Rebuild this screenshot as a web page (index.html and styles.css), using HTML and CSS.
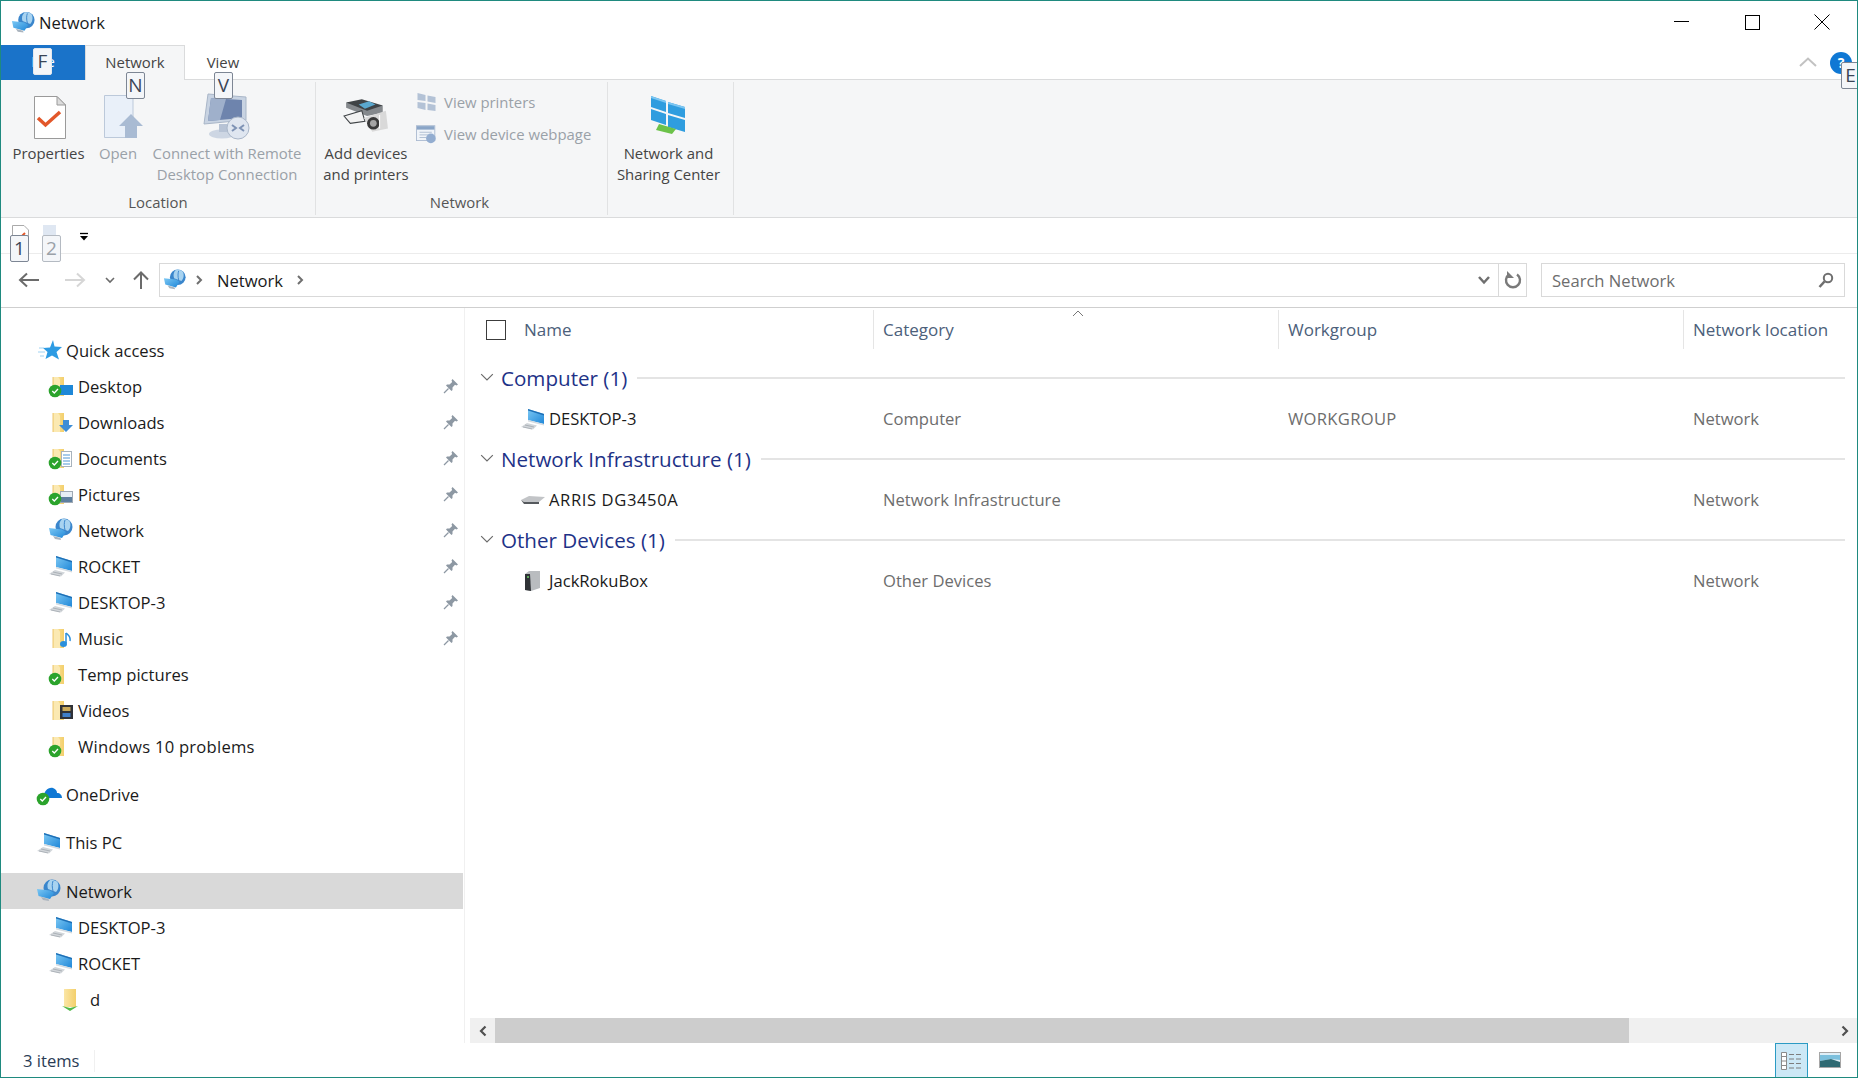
FILE: index.html
```html
<!DOCTYPE html>
<html lang="en">
<head>
<meta charset="utf-8">
<title>Network</title>
<link rel="stylesheet" href="styles.css">
</head>
<body>
<svg class="defs" width="0" height="0" aria-hidden="true">
  <defs>
    <linearGradient id="gblue" x1="0" y1="0" x2="1" y2="1"><stop offset="0" stop-color="#7cc8f4"/><stop offset="1" stop-color="#1f87d8"/></linearGradient>
    <linearGradient id="gfold" x1="0" y1="0" x2="1" y2="0"><stop offset="0" stop-color="#fbe6a6"/><stop offset="1" stop-color="#f3cf6b"/></linearGradient>
    <symbol id="network" viewBox="0 0 26 24">
      <circle cx="16" cy="9" r="8.500" fill="#3a86cc"/>
      <path d="M14 1C11 4 11 7 12 10L20 13C23 10 23 5 21 2.500 19 1.200 16.500 .7 14 1z" fill="#a8d3f0"/>
      <path d="M17 2C16 5 16 8 17 12" stroke="#3a86cc" fill="none"/>
      <path d="M1 10 14 11.500 18 14 14 20 2.500 17z" fill="url(#gblue)"/>
      <path d="M5 18 12.500 20 13 22 7 21z" fill="#aab4be"/>
    </symbol>
    <symbol id="computer" viewBox="0 0 26 24">
      <path d="M8 2 24 7V17L8 13z" fill="url(#gblue)"/>
      <path d="M8 2 24 7V8.500L8 3.500z" fill="#1e6fb5"/>
      <path d="M8 13 24 17V18.500L8 14.500z" fill="#d5dbe0"/>
      <path d="M7 16 17 18.500 13 22.500 1 20z" fill="#d2d6da"/>
      <path d="M5 18 14 20M3 20 12 22" stroke="#9aa1a8" stroke-width=".7"/>
    </symbol>
    <symbol id="folder" viewBox="0 0 26 24">
      <path d="M5 3H16V22H5z" fill="url(#gfold)"/>
      <path d="M5 3H10L12 5.500V22H5z" fill="#fbe9b2"/>
      <path d="M5 3V22" stroke="#e8b94c" stroke-width=".8"/>
    </symbol>
    <symbol id="sync" viewBox="0 0 26 24">
      <circle cx="7" cy="17" r="6.300" fill="#2ba32c"/>
      <path d="M4.300 17 6.300 19 10 15" fill="none" stroke="#fff" stroke-width="1.300"/>
    </symbol>
    <symbol id="pin" viewBox="0 0 16 16">
      <path d="M9.500 1 15 6.500 13.500 7.500 12 6.800 9.500 9.500 9.500 12 8.500 13 3 7.500 4 6.500 6.500 6.500 9.200 4 8.500 2.500z" fill="#8d98a3"/>
      <path d="M5.500 10.500 1 15" stroke="#8d98a3" stroke-width="1.300"/>
    </symbol>
    <symbol id="chev" viewBox="0 0 12 12">
      <path d="M1 3.500 6 8.500 11 3.500" fill="none" stroke="currentColor" stroke-width="1"/>
    </symbol>
    <symbol id="crumb" viewBox="0 0 10 12">
      <path d="M3 2 7 6 3 10" fill="none" stroke="#6f6f6f" stroke-width="2"/>
    </symbol>
  </defs>
</svg>

<div class="window">
  <header class="titlebar">
    <svg class="title-ico"><use href="#network"/></svg>
    <span class="title-text">Network</span>
    <div class="winctl">
      <span class="winbtn"><svg width="16" height="16" viewBox="0 0 16 16"><path d="M0 7.500H15" stroke="#000"/></svg></span>
      <span class="winbtn"><svg width="16" height="16" viewBox="0 0 16 16"><rect x="1.500" y="1.500" width="14" height="14" fill="none" stroke="#000"/></svg></span>
      <span class="winbtn"><svg width="16" height="16" viewBox="0 0 16 16"><path d="M.5.500 15.500 15.500M15.500.500 .5 15.500" stroke="#000"/></svg></span>
    </div>
  </header>

  <nav class="tabs">
    <span class="tab tab-file">File</span>
    <span class="tab tab-active">Network</span>
    <span class="tab tab-view">View</span>
    <span class="tabs-right">
      <svg class="collapse" width="18" height="10" viewBox="0 0 18 10"><path d="M1 9 9 1.500 17 9" fill="none" stroke="#c2c2c2" stroke-width="2"/></svg>
      <span class="help">?</span>
    </span>
  </nav>

  <section class="ribbon">
    <div class="rgroup rg-location">
      <div class="rbody">
        <div class="bigbtn bb-prop">
          <svg class="bigico" width="36" height="46" viewBox="0 0 36 46">
            <path d="M3.500 2.500H26L34.500 11V44.500H3.500z" fill="#fff" stroke="#9a9a9a"/>
            <path d="M26 2.500V11H34.500z" fill="#dcdcdc" stroke="#9a9a9a"/>
            <path d="M7 24 14.500 31 29 18" fill="none" stroke="#e2572a" stroke-width="3.500"/>
          </svg>
          <span>Properties</span>
        </div>
        <div class="bigbtn bb-open is-off">
          <svg class="bigico" width="46" height="46" viewBox="0 0 46 46">
            <path d="M3.500 2.500H32V44.500H3.500z" fill="#e9f0f9" stroke="#bcc9da"/>
            <path d="M30 21 42 33H36V45H24V33H18z" fill="#a9bbd3"/>
          </svg>
          <span>Open</span>
        </div>
        <div class="bigbtn bb-rdp is-off">
          <svg class="bigico" width="50" height="50" viewBox="0 0 50 50">
            <path d="M6 3 44 6V29L2 33z" fill="#c8d3e2" stroke="#a9b6c8"/>
            <path d="M9 7 40 9V27L6 30z" fill="#6e84ad"/>
            <path d="M9 7 24 8 18 29 6 30z" fill="#9fb0cb"/>
            <ellipse cx="20" cy="43" rx="13" ry="4.500" fill="#cdd6e3"/>
            <path d="M17 33H25V41H17z" fill="#b7c3d5"/>
            <circle cx="36" cy="37" r="11" fill="#dfe6f0" stroke="#a9b6c8"/>
            <path d="M30 34 34 37 30 40M42 34 38 37 42 40" fill="none" stroke="#7e93b5" stroke-width="2"/>
          </svg>
          <span>Connect with Remote<br>Desktop Connection</span>
        </div>
      </div>
      <div class="rlabel rl-loc">Location</div>
    </div>

    <div class="rgroup rg-network">
      <div class="rbody">
        <div class="bigbtn bb-add">
          <svg class="bigico" width="46" height="50" viewBox="1 -1 44 38">
            <path d="M4 5V10L24 18 39 15V8z" fill="#85898d"/>
            <path d="M4 5 19 2 39 8 24 13z" fill="#3f4346"/>
            <path d="M16 7 26 4 32 7 22 11z" fill="#5aa8cf"/>
            <path d="M2 18 19 13 22 23 8 25z" fill="#f2f2f2" stroke="#3f4346"/>
            <path d="M21 20 42 13 44 30 29 33z" fill="#d9d9d9"/>
            <circle cx="30" cy="25" r="6" fill="#3a3a3a"/>
            <circle cx="30" cy="25" r="3.200" fill="#a5a5a5"/>
            <path d="M36 30V17" stroke="#fff"/>
          </svg>
          <span>Add devices<br>and printers</span>
        </div>
        <div class="smallcol">
          <div class="smallbtn is-off">
            <svg width="20" height="20" viewBox="0 0 20 20"><path d="M1 1 9 3V9L1 8zM11 3.500 19 5V11L11 9.500zM1 10 9 11V18L1 16zM11 11.500 19 13V19L11 18z" fill="#b3c2d6"/></svg>
            <span>View printers</span>
          </div>
          <div class="smallbtn is-off">
            <svg width="24" height="22" viewBox="0 0 24 22"><rect x=".5" y="1.500" width="21" height="17" fill="#f0f4f9" stroke="#a9b9cf"/><path d="M1 2H21V6H1z" fill="#8aa5c7"/><path d="M4 9H18M4 12H14M4 15H12" stroke="#a9b9cf"/><circle cx="17" cy="16" r="5.500" fill="#93add0"/></svg>
            <span>View device webpage</span>
          </div>
        </div>
      </div>
      <div class="rlabel">Network</div>
    </div>

    <div class="rgroup rg-share">
      <div class="rbody">
        <div class="bigbtn bb-share">
          <svg class="bigico" width="38" height="42" viewBox="0 0 38 42">
            <path d="M1 1 16 6V17L1 12zM18 7 35 12V23L18 18zM1 14 16 19V30L1 25zM18 20 35 25V37L18 32z" fill="#2f9ddf"/>
            <path d="M1 1 16 6V8L1 3zM18 7 35 12V14L18 9z" fill="#7cc6f2"/>
            <path d="M9 29 26 34 22 39 6 35z" fill="#6cc24a"/>
          </svg>
          <span>Network and<br>Sharing Center</span>
        </div>
      </div>
    </div>
  </section>

  <div class="qat">
    <svg class="qat-ico" width="17" height="20" viewBox="0 0 17 20"><path d="M.5.500H12L16.500 5V19.500H.5z" fill="#fff" stroke="#aaa"/><path d="M4 11 7 14 13 8" fill="none" stroke="#e2572a" stroke-width="2"/></svg>
    <svg class="qat-ico" width="17" height="20" viewBox="0 0 17 20"><rect width="13" height="20" x="1" fill="#dfe7f2"/></svg>
    <svg class="qat-more" width="10" height="10" viewBox="0 0 10 10"><path d="M1 1.500H9" stroke="#000" stroke-width="1.300"/><path d="M1 4H9L5 8.500z" fill="#000"/></svg>
  </div>

  <div class="addrrow">
    <div class="navbtns">
      <svg class="nb-back" width="22" height="16" viewBox="0 0 22 16"><path d="M21 8H3M9 1.500 2 8 9 14.500" fill="none" stroke="#6b6b6b" stroke-width="2"/></svg>
      <svg class="nb-fwd" width="22" height="16" viewBox="0 0 22 16"><path d="M1 8H19M13 1.500 20 8 13 14.500" fill="none" stroke="#d6d6d6" stroke-width="2"/></svg>
      <svg class="nb-down" width="10" height="8" viewBox="0 0 10 8"><path d="M1 2 5 6 9 2" fill="none" stroke="#6b6b6b" stroke-width="1.600"/></svg>
      <svg class="nb-up" width="18" height="20" viewBox="0 0 18 20"><path d="M9 19V3M2 9.500 9 2.500 16 9.500" fill="none" stroke="#6b6b6b" stroke-width="2"/></svg>
    </div>
    <div class="addrbox">
      <svg class="addr-net"><use href="#network"/></svg>
      <svg class="crumb"><use href="#crumb"/></svg>
      <span class="addr-text">Network</span>
      <svg class="crumb"><use href="#crumb"/></svg>
      <svg class="addr-drop" width="14" height="10" viewBox="0 0 14 10"><path d="M2 2 7 7.500 12 2" fill="none" stroke="#6f6f6f" stroke-width="2.500"/></svg>
      <span class="addr-refresh">
        <svg width="18" height="18" viewBox="0 0 18 18"><path d="M13 3.500A7 7 0 1 1 5 3.500" fill="none" stroke="#7a7a7a" stroke-width="2.400"/><path d="M4 0V7H11z" fill="#7a7a7a" transform="translate(-1 0)"/></svg>
      </span>
    </div>
    <div class="searchbox">
      <span>Search Network</span>
      <svg width="16" height="17" viewBox="0 0 16 17"><circle cx="10" cy="6" r="4.200" fill="none" stroke="#6f6f6f" stroke-width="2"/><path d="M6.500 9.500 1.500 15" stroke="#6f6f6f" stroke-width="2.600"/></svg>
    </div>
  </div>

  <main class="main">
    <aside class="navpane">
      <div class="navgroup">
        <div class="row lv1"><svg class="ico" viewBox="0 0 26 24"><path d="M17 2 18.500 8.500 26 9 20.500 14 23 21.500 16 17.500 9.500 21 11.500 14 7 10 14 9.500z" fill="#2d9be3"/><path d="M3 10H8M2 14H9M4 18H8" stroke="#9fd2f2"/></svg><span>Quick access</span></div>
        <div class="row lv2"><svg class="ico" viewBox="0 0 26 24"><use href="#folder"/><rect x="12" y="11" width="13" height="10" fill="#1e88d8"/><use href="#sync"/></svg><span>Desktop</span><svg class="pin"><use href="#pin"/></svg></div>
        <div class="row lv2"><svg class="ico" viewBox="0 0 26 24"><use href="#folder"/><path d="M15 10H21V15H25L18 22 11 15H15z" fill="#3d8dd6"/></svg><span>Downloads</span><svg class="pin"><use href="#pin"/></svg></div>
        <div class="row lv2"><svg class="ico" viewBox="0 0 26 24"><use href="#folder"/><rect x="13.500" y="5.500" width="10" height="15" fill="#fff" stroke="#a8b3bd"/><path d="M15 9H22M15 12H22M15 15H22M15 18H22" stroke="#4e97d6"/><use href="#sync"/></svg><span>Documents</span><svg class="pin"><use href="#pin"/></svg></div>
        <div class="row lv2"><svg class="ico" viewBox="0 0 26 24"><use href="#folder"/><rect x="12.500" y="9.500" width="12" height="11" fill="#e7eef5" stroke="#9fa9b4"/><path d="M13 15H24V20H13z" fill="#5e7f9f"/><use href="#sync"/></svg><span>Pictures</span><svg class="pin"><use href="#pin"/></svg></div>
        <div class="row lv2"><svg class="ico"><use href="#network"/></svg><span>Network</span><svg class="pin"><use href="#pin"/></svg></div>
        <div class="row lv2"><svg class="ico"><use href="#computer"/></svg><span>ROCKET</span><svg class="pin"><use href="#pin"/></svg></div>
        <div class="row lv2"><svg class="ico"><use href="#computer"/></svg><span>DESKTOP-3</span><svg class="pin"><use href="#pin"/></svg></div>
        <div class="row lv2"><svg class="ico" viewBox="0 0 26 24"><use href="#folder"/><path d="M18 7V17" stroke="#2a8fdc" stroke-width="1.500"/><ellipse cx="15.500" cy="18" rx="3.500" ry="3" fill="#2a8fdc"/><path d="M18 7C20 9 23 10 22 15" fill="none" stroke="#2a8fdc" stroke-width="1.500"/></svg><span>Music</span><svg class="pin"><use href="#pin"/></svg></div>
        <div class="row lv2"><svg class="ico" viewBox="0 0 26 24"><use href="#folder"/><use href="#sync"/></svg><span>Temp pictures</span></div>
        <div class="row lv2"><svg class="ico" viewBox="0 0 26 24"><use href="#folder"/><rect x="12" y="7" width="13" height="14" fill="#2f3238"/><rect x="14.500" y="9" width="8" height="4" fill="#c9a95a"/><rect x="14.500" y="15" width="8" height="4" fill="#3f7fc9"/></svg><span>Videos</span></div>
        <div class="row lv2"><svg class="ico" viewBox="0 0 26 24"><use href="#folder"/><use href="#sync"/></svg><span class="wide">Windows 10 problems</span></div>
      </div>
      <div class="navgroup">
        <div class="row lv1"><svg class="ico" viewBox="0 0 26 24"><path d="M7 16C8 9 12 5 17 6 20 7 21 9 21 11 24 11 26 13 26 16z" fill="#0f78d4"/><use href="#sync"/></svg><span>OneDrive</span></div>
      </div>
      <div class="navgroup">
        <div class="row lv1"><svg class="ico"><use href="#computer"/></svg><span>This PC</span></div>
      </div>
      <div class="navgroup">
        <div class="row lv1 is-selected"><svg class="ico"><use href="#network"/></svg><span>Network</span></div>
        <div class="row lv2"><svg class="ico"><use href="#computer"/></svg><span>DESKTOP-3</span></div>
        <div class="row lv2"><svg class="ico"><use href="#computer"/></svg><span>ROCKET</span></div>
        <div class="row lv3"><svg class="ico" viewBox="0 0 26 24"><path d="M4 2H16V20H4z" fill="url(#gfold)"/><path d="M2 19 10 21 18 19 10 24z" fill="#52b848"/></svg><span>d</span></div>
      </div>
    </aside>

    <section class="content">
      <div class="colheads">
        <div class="col col-name">
          <span class="checkbox"></span><span>Name</span>
        </div>
        <div class="col col-cat">Category
          <svg class="sortcaret" width="12" height="7" viewBox="0 0 12 7"><path d="M1 6 6 1 11 6" fill="none" stroke="#777"/></svg>
        </div>
        <div class="col col-wg">Workgroup</div>
        <div class="col col-loc">Network location</div>
      </div>

      <div class="filelist">
        <div class="grouphead"><svg class="gchev"><use href="#chev"/></svg><span>Computer (1)</span><i></i></div>
        <div class="item">
          <div class="cell cell-name"><svg class="ico"><use href="#computer"/></svg><span>DESKTOP-3</span></div>
          <div class="cell">Computer</div><div class="cell cell-caps">WORKGROUP</div><div class="cell">Network</div>
        </div>
        <div class="grouphead"><svg class="gchev"><use href="#chev"/></svg><span>Network Infrastructure (1)</span><i></i></div>
        <div class="item">
          <div class="cell cell-name"><svg class="ico" viewBox="0 0 26 24"><path d="M1 12 9 8 25 9 19 14 4 14z" fill="#c2c4c7"/><path d="M1 12 4 16H19V14L4 14z" fill="#55595d"/></svg><span class="wide-name">ARRIS DG3450A</span></div>
          <div class="cell">Network Infrastructure</div><div class="cell"></div><div class="cell">Network</div>
        </div>
        <div class="grouphead"><svg class="gchev"><use href="#chev"/></svg><span>Other Devices (1)</span><i></i></div>
        <div class="item">
          <div class="cell cell-name"><svg class="ico" viewBox="0 0 26 24"><path d="M5 5 9 2H20V19L11 22 5 21z" fill="#b9bcbf"/><path d="M5 5 10 5 11 22 5 21z" fill="#2f3236"/><circle cx="8" cy="8" r="1" fill="#6fd06a"/></svg><span>JackRokuBox</span></div>
          <div class="cell">Other Devices</div><div class="cell"></div><div class="cell">Network</div>
        </div>
      </div>

      <div class="hscroll">
        <span class="sb-arrow"><svg width="10" height="12" viewBox="0 0 10 12"><path d="M7.500 1.500 3 6 7.500 10.500" fill="none" stroke="#505050" stroke-width="2.200"/></svg></span>
        <span class="sb-thumb"></span>
        <span class="sb-track"></span>
        <span class="sb-arrow"><svg width="10" height="12" viewBox="0 0 10 12"><path d="M2.500 1.500 7 6 2.500 10.500" fill="none" stroke="#505050" stroke-width="2.200"/></svg></span>
      </div>
    </section>
  </main>

  <footer class="statusbar">
    <span class="status-count">3 items</span>
    <span class="viewbtns">
      <span class="vbtn is-on">
        <svg width="24" height="20" viewBox="0 0 24 20"><path d="M1.500 1.500H6.500V18.500H1.500z" fill="#fff" stroke="#8a8a8a"/><path d="M1.500 5.500H6.500M1.500 10H6.500M1.500 14.500H6.500" stroke="#8a8a8a"/><path d="M9 3.500H14M16 3.500H21M9 8H14M16 8H21M9 12.500H14M16 12.500H21M9 17H14M16 17H21" stroke="#7d7d7d"/></svg>
      </span>
      <span class="vbtn">
        <svg width="22" height="16" viewBox="0 0 22 16"><rect x=".5" y=".5" width="21" height="15" fill="#dfeff7" stroke="#a6a6a6"/><path d="M1 3H21V8L12 7 1 9z" fill="#7cc0dd"/><path d="M1 9 12 7 21 10V15H1z" fill="#2f6a73"/></svg>
      </span>
    </span>
  </footer>

  <span class="keytip kt-f">F</span>
  <span class="keytip kt-n">N</span>
  <span class="keytip kt-v">V</span>
  <span class="keytip kt-e">E</span>
  <span class="keytip kt-1">1</span>
  <span class="keytip kt-2 is-off">2</span>
</div>
</body>
</html>
```

FILE: styles.css
```css
* { box-sizing: border-box; }
html, body { margin: 0; padding: 0; background: #fff; }
body { width: 1858px; height: 1078px; overflow: hidden; font-family: "Open Sans", "Noto Sans", sans-serif; font-size: 16.600px; color: #1a1a1a; }
.defs { position: absolute; }
svg { display: block; flex: none; }

.window { position: relative; width: 1858px; height: 1078px; border: 1px solid #1f8a7f; display: flex; flex-direction: column; overflow: hidden; }

.titlebar { height: 44px; display: flex; align-items: center; flex: none; padding-left: 10px; }
.title-ico { width: 25px; height: 24px; margin-right: 3px; }
.title-text { font-size: 16.600px; color: #1a1a1a; margin-top: -1px; }
.winctl { margin-left: auto; display: flex; margin-top: -2px; }
.winbtn { width: 70px; height: 30px; display: flex; align-items: center; justify-content: center; }

.tabs { height: 35px; display: flex; flex: none; position: relative; z-index: 1; margin-bottom: -1px; font-size: 14.900px; }
.tab { display: flex; align-items: center; justify-content: center; color: #444; padding-bottom: 2px; }
.tab-file { width: 84px; background: #1a73c9; color: #fff; border-bottom: 1px solid #1a73c9; }
.tab-active { width: 100px; background: #f5f6f7; border: 1px solid #dadbdc; border-bottom: 0; }
.tab-view { width: 76px; }
.tabs-right { margin-left: auto; display: flex; align-items: center; }
.collapse { margin-right: 13px; margin-top: -1px; }
.help { width: 22px; height: 22px; border-radius: 50%; background: #0f78d4; color: #fff; font-size: 14px; font-weight: 700; text-align: center; line-height: 22px; margin-right: 5px; margin-top: 1px; }

.ribbon { height: 139px; flex: none; background: #f5f6f7; border-top: 1px solid #dadbdc; border-bottom: 1px solid #dadbdc; display: flex; font-size: 14.900px; }
.rgroup { display: flex; flex-direction: column; border-right: 1px solid #e1e2e3; margin-top: 2px; margin-bottom: 2px; }
.rg-location { width: 315px; }
.rg-network { width: 292px; }
.rg-share { width: 126px; }
.rbody { flex: 1; display: flex; }
.rlabel { height: 26px; text-align: center; color: #555; line-height: 26px; padding-right: 4px; }
.rl-loc { padding-right: 0; }
.bigbtn { display: flex; flex-direction: column; align-items: center; text-align: center; line-height: 21px; color: #444; white-space: nowrap; padding-top: 9px; }
.bigbtn svg { height: 50px; margin-bottom: 2px; }
.bigbtn > span { display: block; }
.is-off, .is-off.keytip { color: #9aa1a8; }
.bb-prop { width: 95px; }
.bb-open { width: 44px; }
.bb-rdp { width: 174px; }
.bb-add { width: 100px; }
.bb-share { width: 121px; }
.bigbtn.bb-prop svg { margin-top: 2px; height: 48px; }
.bigbtn.bb-open svg { margin-left: 6px; margin-right: -6px; }
.smallcol { display: flex; flex-direction: column; padding-top: 8px; gap: 9px; }
.smallbtn { display: flex; align-items: center; gap: 7px; height: 23px; white-space: nowrap; }
.smallbtn svg { width: 21px; }

.qat { height: 36px; flex: none; display: flex; align-items: flex-start; gap: 13px; padding: 7px 0 0 11px; border-bottom: 1px solid #ececec; }
.qat-more { margin: 7px 0 0 7px; }

.addrrow { height: 54px; flex: none; display: flex; align-items: center; border-bottom: 1px solid #cfcfcf; padding-bottom: 1px; }
.navbtns { width: 158px; display: flex; align-items: center; padding-left: 17px; }
.nb-fwd { margin-left: 24px; }
.nb-down { margin-left: 19px; }
.nb-up { margin-left: 17px; }
.addrbox { width: 1368px; height: 34px; border: 1px solid #d9d9d9; display: flex; align-items: center; padding-left: 3px; }
.addr-net { width: 24px; height: 24px; margin-right: 7px; }
.crumb { width: 10px; height: 12px; }
.addr-text { margin: 0 12px 0 13px; }
.addr-drop { margin-left: auto; margin-right: 7px; }
.addr-refresh { width: 28px; height: 32px; border-left: 1px solid #d9d9d9; display: flex; align-items: center; justify-content: center; }
.searchbox { width: 304px; height: 34px; margin-left: 14px; border: 1px solid #d9d9d9; display: flex; align-items: center; justify-content: space-between; padding: 0 10px 0 10px; color: #6d6d6d; }

.main { flex: 1; min-height: 0; display: flex; }
.navpane { width: 464px; border-right: 1px solid #f0f0f0; padding-top: 24px; flex: none; }
.navgroup { margin-bottom: 12.400px; }
.row { height: 36px; display: flex; align-items: center; gap: 4px; margin-right: 1px; white-space: nowrap; }
.ico { width: 26px; height: 24px; }
.lv1 { padding-left: 35px; }
.lv2 { padding-left: 47px; }
.lv3 { padding-left: 59px; gap: 4px; }
.wide { letter-spacing: .25px; }
.wide-name { letter-spacing: .6px; }
.pin { width: 16px; height: 16px; margin-left: auto; margin-right: 4px; }
.is-selected { background: #d9d9d9; }

.content { flex: 1; min-width: 0; display: flex; flex-direction: column; }
.colheads { height: 43px; flex: none; display: flex; color: #4c607a; font-size: 17px; }
.col { display: flex; align-items: center; height: 39px; margin-top: 2px; padding-left: 9px; border-right: 1px solid #e5e5e5; white-space: nowrap; position: relative; }
.col-name { width: 409px; padding-left: 21px; gap: 18px; }
.col-cat { width: 405px; }
.col-wg { width: 405px; }
.col-loc { flex: 1; border-right: 0; }
.checkbox { width: 20px; height: 20px; border: 1px solid #3c3c3c; }
.sortcaret { position: absolute; top: 0; left: 198px; }

.filelist { flex: 1; min-height: 0; padding-top: 7px; }
.grouphead { height: 40px; display: flex; align-items: center; color: #1e3287; font-size: 20.600px; padding: 0 12px 0 15px; white-space: nowrap; }
.gchev { width: 14px; height: 14px; color: #6a6a6a; margin: -2px 7px 0 0; }
.grouphead i { flex: 1; height: 2px; margin-left: 10px; background: #e4e4e4; }
.item { height: 41px; display: flex; align-items: center; color: #6d6d6d; white-space: nowrap; }
.cell { width: 405px; padding-left: 10px; }
.cell:last-child { flex: 1; width: auto; }
.cell-caps { letter-spacing: .3px; }
.cell-name { width: 408px; padding-left: 55px; display: flex; align-items: center; gap: 3px; color: #1a1a1a; }

.hscroll { height: 25px; flex: none; margin-left: 5px; background: #f0f0f0; display: flex; align-items: stretch; }
.sb-arrow { width: 25px; display: flex; align-items: center; justify-content: center; }
.sb-thumb { width: 1134px; background: #cdcdcd; }
.sb-track { flex: 1; }

.statusbar { height: 34px; flex: none; display: flex; align-items: center; color: #2a3c55; font-size: 16.600px; padding-left: 22px; padding-top: 2px; }
.status-count { padding-right: 14px; border-right: 1px solid #f0f0f0; height: 22px; line-height: 22px; }
.viewbtns { margin-left: auto; display: flex; padding-right: 11px; gap: 5px; margin-top: -2px; height: 34px; }
.vbtn { width: 33px; display: flex; align-items: center; justify-content: center; }
.vbtn.is-on { background: #cce8f6; border: 1px solid #2b9bc4; border-bottom: 0; }

.keytip { position: absolute; height: 27px; width: 19px; background: #f4f6f9; border: 1px solid #7d8694; border-radius: 2px; font-size: 19px; line-height: 25px; text-align: center; color: #3a4556; z-index: 5; }
.kt-f { left: 32px; top: 47px; border-color: #e4e8ee; }
.kt-n { left: 125px; top: 71px; }
.kt-v { left: 213px; top: 71px; }
.kt-e { left: 1840px; top: 61px; }
.kt-1 { left: 9px; top: 234px; }
.kt-2 { left: 41px; top: 234px; border-color: #b4bac2; }
```
